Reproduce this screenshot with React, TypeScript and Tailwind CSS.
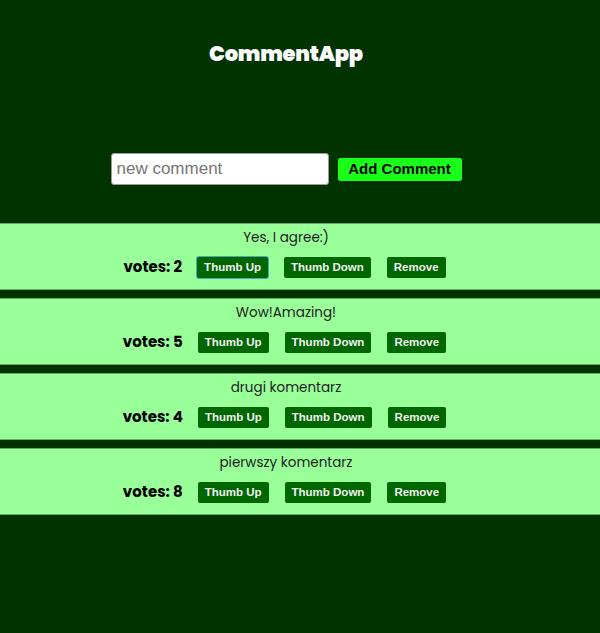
import { useState } from "react"

interface Comment {
    id: number
    text: string
    votes: number
}

const initialComments: Comment[] = [
    { id: 4, text: "Yes, I agree:)", votes: 2 },
    { id: 3, text: "Wow!Amazing!", votes: 5 },
    { id: 2, text: "drugi komentarz", votes: 4 },
    { id: 1, text: "pierwszy komentarz", votes: 8 },
]

export default function App() {
    const [comments, setComments] = useState<Comment[]>(initialComments)
    const [draft, setDraft] = useState("")

    const vote = (id: number, delta: number) =>
        setComments(comments.map((c) => (c.id === id ? { ...c, votes: c.votes + delta } : c)))

    return (
        <div className="min-h-[633px] bg-[#003300] font-['Poppins','Inter','Liberation_Sans',sans-serif]">
            {/* Header */}
            <div className="pt-[37px] pr-[28px] text-center">
                <h1 className="text-[21px] leading-[33px] font-black text-white tracking-[-0.2px]">CommentApp</h1>
            </div>

            {/* Form */}
            <div className="mt-[83px] pr-[28px] flex justify-center items-center gap-[9px]">
                <input
                    value={draft}
                    onChange={(e) => setDraft(e.target.value)}
                    placeholder="new comment"
                    className="w-[218px] h-[32px] bg-white rounded-[3px] border border-[#9a9a9a] px-[5px] text-[17px] font-['Liberation_Sans',Arial,sans-serif] text-black placeholder:text-[#767676] outline-none"
                />
                <button className="w-[124px] h-[23px] bg-[#19ff19] rounded-[2px] text-[15px] font-bold text-black font-['Liberation_Sans',Arial,sans-serif]">
                    Add Comment
                </button>
            </div>

            {/* Comment list */}
            <ul className="mt-[38px] flex flex-col gap-[8px]">
                {comments.map((c, i) => (
                    <li key={c.id} className="h-[67px] bg-[#99ff99] border-y border-[#66a866] pt-[3px] pr-[28px] flex flex-col items-center">
                        <p className="text-[13.5px] leading-[21px] font-normal text-[#222]">{c.text}</p>
                        <div className="mt-[8px] pr-[3px] flex items-center">
                            <span className="text-[15px] font-bold text-black mr-[15px]">votes: {c.votes}</span>
                            <div className="flex gap-[16px] font-['Liberation_Sans',Arial,sans-serif]">
                                <button
                                    onClick={() => vote(c.id, 1)}
                                    className={`h-[21px] px-[7px] bg-[#006600] rounded-[2px] text-[11.5px] font-bold text-[#f2f2f2] ${i === 0 ? "ring-1 ring-[#4aa6c0]" : ""}`}
                                >
                                    Thumb Up
                                </button>
                                <button
                                    onClick={() => vote(c.id, -1)}
                                    className="h-[21px] px-[7px] bg-[#006600] rounded-[2px] text-[11.5px] font-bold text-[#f2f2f2]"
                                >
                                    Thumb Down
                                </button>
                                <button
                                    onClick={() => setComments(comments.filter((x) => x.id !== c.id))}
                                    className="h-[21px] px-[7px] bg-[#006600] rounded-[2px] text-[11.5px] font-bold text-[#f2f2f2]"
                                >
                                    Remove
                                </button>
                            </div>
                        </div>
                    </li>
                ))}
            </ul>
        </div>
    )
}
